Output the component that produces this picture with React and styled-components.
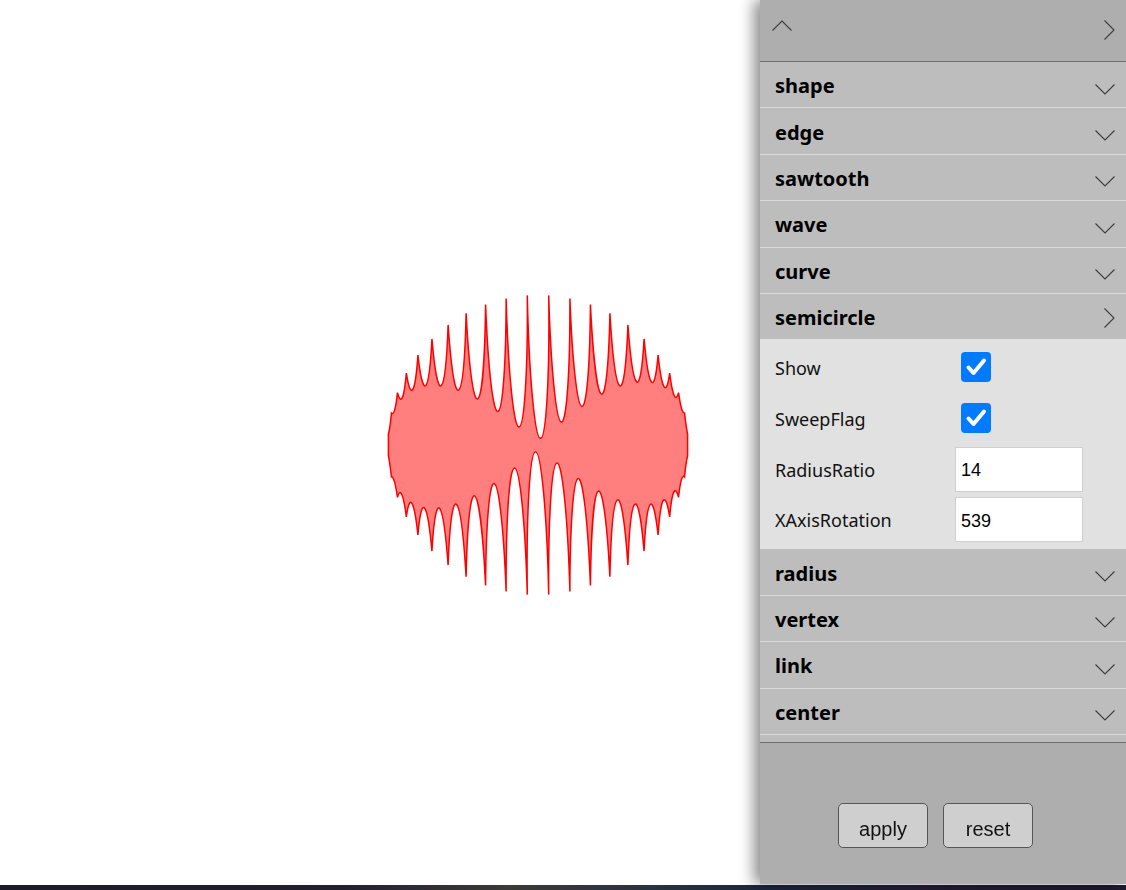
import React, { useMemo } from 'react'
import styled, { createGlobalStyle } from 'styled-components'

const GlobalStyle = createGlobalStyle`
  html, body {
    margin: 0;
    padding: 0;
    height: 100%;
    overflow: hidden;
    background: #fff;
  }
  #root {
    height: 100%;
  }
`

const sections = [
  'shape',
  'edge',
  'sawtooth',
  'wave',
  'curve',
  'semicircle',
  'radius',
  'vertex',
  'link',
  'center',
]

const semicircleFields = [
  { label: 'Show', type: 'check', value: true },
  { label: 'SweepFlag', type: 'check', value: true },
  { label: 'RadiusRatio', type: 'number', value: '14' },
  { label: 'XAxisRotation', type: 'number', value: '539' },
]

function buildShape({ cx, cy, r, count, ratio, rotation, sweep }) {
  const step = (Math.PI * 2) / count
  const start = -Math.PI / 2 + step / 2
  const pts = []
  for (let i = 0; i < count; i++) {
    const a = start - i * step
    pts.push([cx + r * Math.cos(a), cy + r * Math.sin(a)])
  }
  let d = `M${pts[0][0].toFixed(2)} ${pts[0][1].toFixed(2)}`
  for (let i = 1; i <= count; i++) {
    const [x, y] = pts[i % count]
    d += ` A${(r / ratio).toFixed(2)} ${r} ${rotation} 0 ${sweep} ${x.toFixed(2)} ${y.toFixed(2)}`
  }
  return d + ' Z'
}

export default function App() {
  const path = useMemo(
    () =>
      buildShape({
        cx: 538,
        cy: 445,
        r: 150,
        count: 44,
        ratio: 14,
        rotation: 539,
        sweep: 1,
      }),
    []
  )

  return (
    <Page>
      <GlobalStyle />
      <Stage>
        <Canvas viewBox="0 0 1126 885">
          <path d={path} fill="rgba(255,0,0,0.5)" stroke="#ff0000" strokeWidth="1.5" />
        </Canvas>
      </Stage>
      <Taskbar />
      <Panel>
        <Header>
          <Chevron dir="up" />
          <Chevron dir="right" />
        </Header>
        <List>
          {sections.map((name) => (
            <Section key={name} name={name} open={name === 'semicircle'} />
          ))}
        </List>
        <Footer>
          <Button>apply</Button>
          <Button>reset</Button>
        </Footer>
      </Panel>
    </Page>
  )
}

function Section({ name, open }) {
  return (
    <>
      <SectionHead>
        <SectionTitle>{name}</SectionTitle>
        <Chevron dir={open ? 'right' : 'down'} />
      </SectionHead>
      {open && (
        <SectionBody>
          {semicircleFields.map((f) => (
            <FieldRow key={f.label}>
              <FieldLabel>{f.label}</FieldLabel>
              {f.type === 'check' ? (
                <CheckBox>
                  <svg width="30" height="30" viewBox="0 0 30 30">
                    <path
                      d="M7.5 15.5 L12.5 21 L23 8.5"
                      fill="none"
                      stroke="#fff"
                      strokeWidth="4"
                      strokeLinecap="round"
                      strokeLinejoin="round"
                    />
                  </svg>
                </CheckBox>
              ) : (
                <NumberInput defaultValue={f.value} />
              )}
            </FieldRow>
          ))}
        </SectionBody>
      )}
    </>
  )
}

function Chevron({ dir }) {
  if (dir === 'up') {
    return (
      <ChevronSvg width="20" height="11" viewBox="0 0 20 11">
        <path d="M0.5 10.5 L10 1 L19.5 10.5" />
      </ChevronSvg>
    )
  }
  if (dir === 'right') {
    return (
      <ChevronSvg width="11" height="20" viewBox="0 0 11 20">
        <path d="M0.5 0.5 L10 10 L0.5 19.5" />
      </ChevronSvg>
    )
  }
  return (
    <ChevronSvg width="20" height="11" viewBox="0 0 20 11" $down>
      <path d="M0.5 0.5 L10 10 L19.5 0.5" />
    </ChevronSvg>
  )
}

const Page = styled.div`
  height: 890px;
  display: flex;
  flex-direction: column;
`

const Stage = styled.div`
  flex: 1;
  display: flex;
`

const Canvas = styled.svg`
  width: 100%;
  height: 885px;
  display: block;
`

const Taskbar = styled.div`
  height: 5px;
  flex: none;
  background: linear-gradient(
    90deg,
    #1c1c28 0%,
    #221f2e 30%,
    #3b3a38 45%,
    #2a3140 58%,
    #1c2640 68%,
    #241b33 85%,
    #221a30 100%
  );
`

const Panel = styled.div`
  position: fixed;
  top: 0;
  right: 0;
  width: 366px;
  height: 884px;
  display: flex;
  flex-direction: column;
  background: #aeaeae;
  box-shadow: -6px 0 14px rgba(0, 0, 0, 0.45);
  font-family: 'Noto Sans', 'Open Sans', sans-serif;
`

const Header = styled.div`
  height: 62px;
  flex: none;
  display: flex;
  justify-content: space-between;
  align-items: flex-start;
  padding: 20px 11px 0 12px;
  box-sizing: border-box;
  border-bottom: 1px solid #707070;
`

const ChevronSvg = styled.svg`
  flex: none;
  display: block;
  margin-top: ${({ $down }) => ($down ? '7px' : '0')};
  path {
    fill: none;
    stroke: #3c3c3c;
    stroke-width: 1.1;
  }
`

const List = styled.div`
  height: 680px;
  flex: none;
  overflow: hidden;
  background: #bdbdbd;
  border-bottom: 1px solid #707070;
`

const SectionHead = styled.div`
  height: 46.4px;
  box-sizing: border-box;
  display: flex;
  align-items: center;
  justify-content: space-between;
  padding: 2px 11px 0 15px;
  background: #bdbdbd;
  border-bottom: 1px solid #dadada;
`

const SectionTitle = styled.span`
  font-size: 20px;
  font-weight: 700;
  color: #000;
`

const SectionBody = styled.div`
  background: #e1e1e1;
  padding: 6px 0 8px 15px;
  display: flex;
  flex-direction: column;
  gap: 6.7px;
  margin-top: -1px;
`

const FieldRow = styled.div`
  height: 44px;
  display: grid;
  grid-template-columns: 180px 1fr;
  align-items: center;
`

const FieldLabel = styled.span`
  font-size: 18px;
  color: #111;
  margin-top: 1px;
`

const CheckBox = styled.span`
  width: 30px;
  height: 30px;
  margin-left: 6px;
  border-radius: 4px;
  background: #007bff;
  display: block;
  svg {
    display: block;
  }
`

const NumberInput = styled.input`
  width: 128px;
  height: 45px;
  box-sizing: border-box;
  border: 1px solid #cfcfcf;
  background: #fff;
  padding: 3px 5px 0;
  font-family: 'Liberation Sans', Arial, sans-serif;
  font-size: 18px;
  color: #000;
  outline: none;
`

const Footer = styled.div`
  flex: 1;
  display: flex;
  justify-content: center;
  align-items: flex-start;
  padding-top: 60px;
`

const Button = styled.button`
  width: 90px;
  height: 45px;
  margin-right: 15px;
  border: 1px solid #555;
  border-radius: 5px;
  background: #cfcfcf;
  font-family: 'Liberation Sans', Arial, sans-serif;
  font-size: 20px;
  color: #111;
  padding: 7px 0 0;
  cursor: pointer;
`
